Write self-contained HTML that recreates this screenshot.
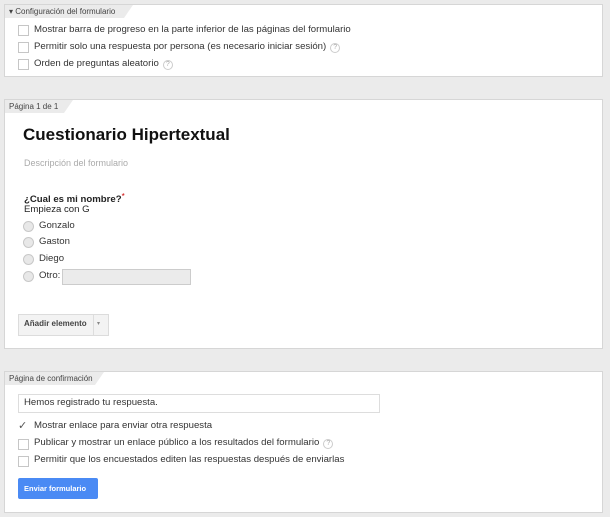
<!DOCTYPE html>
<html><head><meta charset="utf-8"><style>
body{margin:0;width:610px;height:517px;background:#ebebeb;font-family:"Liberation Sans",Arial,sans-serif;position:relative;overflow:hidden;color:#222}
.p{position:absolute;left:4px;width:599px;background:#fff;border:1px solid #d6d6d6;box-sizing:border-box}
.tab{position:absolute;left:0;top:0;height:13px;background:#ebebeb;font-size:8px;color:#444;line-height:13px;padding-left:4px;white-space:nowrap}
.tab:after{content:"";position:absolute;right:-9px;top:0;border-top:13px solid #ebebeb;border-right:9px solid transparent}
.a{position:absolute;white-space:nowrap}
.cb{position:absolute;width:9px;height:9px;border:1px solid #c6c6c6;background:#fff}
.t{font-size:9.6px;color:#333}
.q{display:inline-block;width:8px;height:8px;border:1px solid #ccc;border-radius:50%;font-size:7px;line-height:8px;text-align:center;color:#aaa;vertical-align:0px;margin-left:4px}
.r{position:absolute;width:9px;height:9px;border:1px solid #c8c8c8;border-radius:50%;background:#e8e8e8}
</style></head><body>
<div class="p" style="top:4px;height:73px">
<div class="tab" style="width:115px">&#9662; Configuración del formulario</div>
</div>
<div class="cb" style="left:18px;top:25px"></div><div class="a t" style="left:34px;top:24px">Mostrar barra de progreso en la parte inferior de las páginas del formulario</div>
<div class="cb" style="left:18px;top:42px"></div><div class="a t" style="left:34px;top:41px">Permitir solo una respuesta por persona (es necesario iniciar sesión)<span class="q">?</span></div>
<div class="cb" style="left:18px;top:59px"></div><div class="a t" style="left:34px;top:58px">Orden de preguntas aleatorio<span class="q">?</span></div>

<div class="p" style="top:99px;height:250px">
<div class="tab" style="width:55px">Página 1 de 1</div>
</div>
<div class="a" style="left:23px;top:125px;font-size:17px;font-weight:bold;color:#111">Cuestionario Hipertextual</div>
<div class="a" style="left:24px;top:158px;font-size:9px;color:#aaa">Descripción del formulario</div>
<div class="a" style="left:24px;top:192px;font-size:9.6px;font-weight:bold;color:#222">¿Cual es mi nombre?<span style="color:#c00;font-weight:normal;font-size:8px;vertical-align:3px">*</span></div>
<div class="a t" style="left:24px;top:204px;color:#222">Empieza con G</div>
<div class="r" style="left:23px;top:221px"></div><div class="a t" style="left:39px;top:220px">Gonzalo</div>
<div class="r" style="left:23px;top:237px"></div><div class="a t" style="left:39px;top:236px">Gaston</div>
<div class="r" style="left:23px;top:254px"></div><div class="a t" style="left:39px;top:253px">Diego</div>
<div class="r" style="left:23px;top:271px"></div><div class="a t" style="left:39px;top:270px">Otro:</div>
<div class="a" style="left:62px;top:269px;width:127px;height:14px;background:#ebebeb;border:1px solid #ccc"></div>
<div class="a" style="left:18px;top:314px;width:89px;height:20px;background:#f3f3f3;border:1px solid #dcdcdc"></div>
<div class="a" style="left:24px;top:319px;font-size:8px;font-weight:bold;color:#444">Añadir elemento</div>
<div class="a" style="left:93px;top:315px;width:1px;height:20px;background:#ddd"></div>
<div class="a" style="left:97px;top:320px;font-size:6px;color:#888">&#9662;</div>

<div class="p" style="top:371px;height:142px">
<div class="tab" style="width:86px">Página de confirmación</div>
</div>
<div class="a" style="left:18px;top:394px;width:360px;height:17px;border:1px solid #ddd;background:#fff"></div>
<div class="a t" style="left:24px;top:397px">Hemos registrado tu respuesta.</div>
<div class="a" style="left:18px;top:419px;font-size:11px;color:#555">&#10003;</div><div class="a t" style="left:34px;top:420px">Mostrar enlace para enviar otra respuesta</div>
<div class="cb" style="left:18px;top:439px"></div><div class="a t" style="left:34px;top:437px">Publicar y mostrar un enlace público a los resultados del formulario<span class="q">?</span></div>
<div class="cb" style="left:18px;top:456px"></div><div class="a t" style="left:34px;top:454px">Permitir que los encuestados editen las respuestas después de enviarlas</div>
<div class="a" style="left:18px;top:478px;width:80px;height:21px;background:#4a8af4;border-radius:2px"></div>
<div class="a" style="left:24px;top:484px;font-size:7.5px;font-weight:bold;color:#fff">Enviar formulario</div>
</body></html>
